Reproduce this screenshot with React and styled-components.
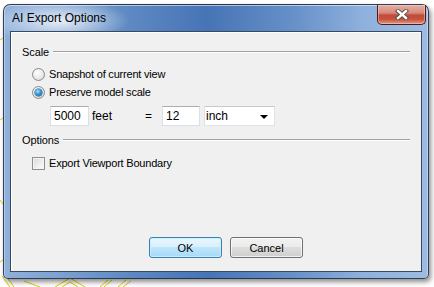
import React from 'react';
import styled, { createGlobalStyle } from 'styled-components';

const GlobalStyle = createGlobalStyle`
  html, body {
    margin: 0;
    padding: 0;
    background: #ffffff;
  }
  body {
    font-family: "Liberation Sans", Arial, sans-serif;
  }
`;

function CloseGlyph() {
  return (
    <svg width="14" height="11" viewBox="0 0 14 11">
      <path d="M3 2 L11 9 M11 2 L3 9" stroke="#4a4a4a" strokeWidth="4.2" strokeLinecap="square" />
      <path d="M3 2 L11 9 M11 2 L3 9" stroke="#ffffff" strokeWidth="2.4" strokeLinecap="square" />
    </svg>
  );
}

function Backdrop() {
  return (
    <svg width="434" height="287" viewBox="0 0 434 287">
      <g stroke="#d8d400" strokeWidth="1" fill="none">
        <path d="M0 40 L3 38 M0 120 L3 118 M0 200 L3 204 M0 262 L3 260" />
        <path d="M2 276 L10 287 M6 276 L14 287" />
        <path d="M55 287 L70 278 L85 287 M62 287 L70 282 L78 287" />
        <path d="M100 287 L108 280 M104 287 L112 280" />
        <path d="M118 287 L126 280 M123 287 L131 281" />
        <path d="M24 281 L40 287" />
      </g>
    </svg>
  );
}

export default function App() {
  return (
    <Stage>
      <GlobalStyle />
      <BackdropLayer>
        <Backdrop />
      </BackdropLayer>
      <Window>
        <TitleBar>
          <Title>AI Export Options</Title>
          <CloseButton>
            <CloseGlyph />
          </CloseButton>
        </TitleBar>
        <Client>
          <GroupHeader $first>
            <span>Scale</span>
            <Rule />
          </GroupHeader>
          <OptionRow>
            <Radio />
            <span>Snapshot of current view</span>
          </OptionRow>
          <OptionRow>
            <Radio $checked />
            <span>Preserve model scale</span>
          </OptionRow>
          <ScaleRow>
            <TextBox $width={39}>5000</TextBox>
            <Unit $width={56}>feet</Unit>
            <Equals>=</Equals>
            <TextBox $width={38}>12</TextBox>
            <Dropdown>
              <span>inch</span>
              <Arrow />
            </Dropdown>
          </ScaleRow>
          <GroupHeader>
            <span>Options</span>
            <Rule />
          </GroupHeader>
          <OptionRow $check>
            <Checkbox />
            <span>Export Viewport Boundary</span>
          </OptionRow>
          <Spacer />
          <ButtonRow>
            <DialogButton $default>OK</DialogButton>
            <DialogButton>Cancel</DialogButton>
          </ButtonRow>
        </Client>
      </Window>
    </Stage>
  );
}

const Stage = styled.div`
  position: relative;
  width: 434px;
  height: 287px;
  overflow: hidden;
  background: #ffffff;
  padding: 4px 0 0 3px;
  box-sizing: border-box;
`;

const BackdropLayer = styled.div`
  position: absolute;
  inset: 0;
  z-index: 0;
`;

const Window = styled.div`
  position: relative;
  z-index: 1;
  width: 426px;
  height: 275px;
  box-sizing: border-box;
  display: flex;
  flex-direction: column;
  padding: 0 6px 6px 6px;
  border: 1px solid rgba(30, 40, 60, 0.85);
  border-radius: 7px 7px 5px 5px;
  background:
    radial-gradient(ellipse 70px 22px at 55px 16px, rgba(235, 242, 250, 0.95), rgba(235, 242, 250, 0) 100%),
    linear-gradient(90deg, #8eb0da 0%, #7fa3d2 12%, #5d88c2 30%, #4774b6 48%, #6690c8 68%, #8fb1dd 85%, #9dbce3 100%);
  box-shadow: 2px 3px 5px rgba(0, 0, 0, 0.45), inset 0 1px 0 rgba(255, 255, 255, 0.55), inset 1px 0 0 rgba(255, 255, 255, 0.35), inset -1px 0 0 rgba(255, 255, 255, 0.35);
`;

const TitleBar = styled.div`
  height: 26px;
  display: flex;
  justify-content: space-between;
  align-items: flex-start;
`;

const Title = styled.div`
  margin: 6px 0 0 2px;
  font-size: 12px;
  color: #000000;
  line-height: 15px;
`;

const CloseButton = styled.div`
  width: 49px;
  height: 20px;
  margin-right: -4px;
  display: flex;
  align-items: center;
  justify-content: center;
  box-sizing: border-box;
  border: 1px solid #4b1d17;
  border-top: none;
  border-radius: 0 0 5px 5px;
  background: linear-gradient(180deg, #e6aea3 0%, #d88c7e 40%, #c24a36 55%, #c8513d 75%, #e09a88 100%);
  box-shadow: inset 0 0 0 1px rgba(255, 220, 210, 0.45);
`;

const Client = styled.div`
  flex: 1;
  display: flex;
  flex-direction: column;
  background: #f0f0f0;
  border: 1px solid #3a4a5e;
  box-shadow: inset 1px 1px 0 #ffffff;
  padding: 0 11px 13px 11px;
  font-size: 11px;
  color: #000000;
`;

const GroupHeader = styled.div`
  display: flex;
  align-items: center;
  height: 14px;
  margin-top: ${p => (p.$first ? '13px' : '7px')};
  color: #000000;
  gap: 4px;
  span {
    line-height: 14px;
    letter-spacing: -0.1px;
  }
`;

const Rule = styled.div`
  flex: 1;
  height: 0;
  border-top: 1px solid #a0a0a0;
  border-bottom: 1px solid #ffffff;
`;

const OptionRow = styled.div`
  display: flex;
  align-items: center;
  height: 18px;
  padding-left: 10px;
  gap: 4px;
  margin-top: ${p => (p.$check ? '7px' : '0')};
  &:nth-of-type(2) {
    margin-top: 6px;
  }
  span {
    letter-spacing: -0.2px;
  }
`;

const Radio = styled.div`
  width: 13px;
  height: 13px;
  box-sizing: border-box;
  border-radius: 50%;
  border: 1px solid #8a8a8a;
  background: radial-gradient(circle at 40% 35%, #ffffff 0%, #eaeaea 55%, #c9c9c9 100%);
  position: relative;
  flex-shrink: 0;
  &::after {
    content: '';
    display: ${p => (p.$checked ? 'block' : 'none')};
    position: absolute;
    left: 2px;
    top: 2px;
    width: 7px;
    height: 7px;
    border-radius: 50%;
    background: radial-gradient(circle at 40% 35%, #a8e4ff 0%, #2f9ad8 45%, #0b4f8c 100%);
    box-shadow: 0 0 0 0.5px #1a4a72;
  }
`;

const Checkbox = styled.div`
  width: 13px;
  height: 13px;
  box-sizing: border-box;
  border: 1px solid #8e8f8f;
  background: linear-gradient(135deg, #d8d8d8 0%, #f0f0f0 60%, #fbfbfb 100%);
  box-shadow: inset 0 0 0 1px #f4f4f4;
  flex-shrink: 0;
`;

const ScaleRow = styled.div`
  display: flex;
  align-items: center;
  height: 20px;
  margin-top: 5px;
  padding-left: 28px;
`;

const TextBox = styled.div`
  width: ${p => p.$width}px;
  height: 20px;
  box-sizing: border-box;
  background: #ffffff;
  border: 1px solid #dbdfe6;
  border-top-color: #abadb3;
  display: flex;
  align-items: center;
  padding-left: 3px;
  font-size: 12px;
`;

const Unit = styled.div`
  width: ${p => p.$width}px;
  padding-left: 3px;
  box-sizing: border-box;
  font-size: 12px;
`;

const Equals = styled.div`
  width: 17px;
  font-size: 12px;
`;

const Dropdown = styled.div`
  width: 71px;
  height: 20px;
  margin-left: 4px;
  box-sizing: border-box;
  background: #ffffff;
  border: 1px solid #dde3ea;
  border-top-color: #c5c9d0;
  display: flex;
  align-items: center;
  justify-content: space-between;
  padding: 0 6px 0 1px;
  font-size: 12px;
`;

const Arrow = styled.div`
  width: 0;
  height: 0;
  border-left: 4px solid transparent;
  border-right: 4px solid transparent;
  border-top: 4px solid #000000;
  margin-top: 1px;
`;

const Spacer = styled.div`
  flex: 1;
`;

const ButtonRow = styled.div`
  display: flex;
  gap: 8px;
  padding-left: 127px;
`;

const DialogButton = styled.div`
  width: 73px;
  height: 21px;
  box-sizing: border-box;
  border-radius: 3px;
  display: flex;
  align-items: center;
  justify-content: center;
  font-size: 11px;
  color: #000000;
  border: 1px solid ${p => (p.$default ? '#3c7fb1' : '#707070')};
  background: ${p =>
    p.$default
      ? 'linear-gradient(180deg, #eaf6fd 0%, #d9f0fc 45%, #bee6fd 50%, #a7d9f5 100%)'
      : 'linear-gradient(180deg, #f2f2f2 0%, #ebebeb 45%, #dddddd 50%, #cfcfcf 100%)'};
  box-shadow: inset 0 0 0 1px ${p => (p.$default ? 'rgba(200, 240, 255, 0.9)' : 'rgba(255, 255, 255, 0.7)')};
`;
